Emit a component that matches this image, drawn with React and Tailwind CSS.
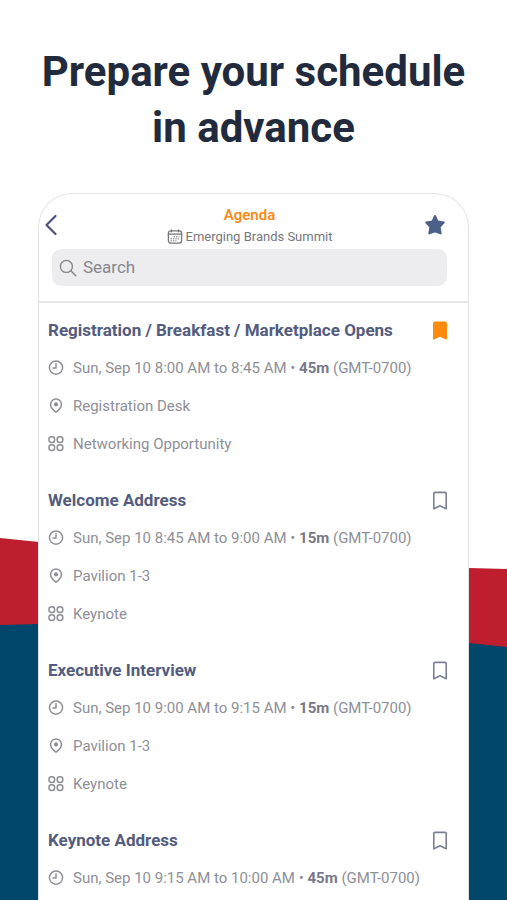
import React, { useState } from "react";

const initialSessions = [
  {
    id: 1,
    title: "Registration / Breakfast / Marketplace Opens",
    time: "Sun, Sep 10 8:00 AM to 8:45 AM",
    duration: "45m",
    location: "Registration Desk",
    category: "Networking Opportunity",
    saved: true,
  },
  {
    id: 2,
    title: "Welcome Address",
    time: "Sun, Sep 10 8:45 AM to 9:00 AM",
    duration: "15m",
    location: "Pavilion 1-3",
    category: "Keynote",
    saved: false,
  },
  {
    id: 3,
    title: "Executive Interview",
    time: "Sun, Sep 10 9:00 AM to 9:15 AM",
    duration: "15m",
    location: "Pavilion 1-3",
    category: "Keynote",
    saved: false,
  },
  {
    id: 4,
    title: "Keynote Address",
    time: "Sun, Sep 10 9:15 AM to 10:00 AM",
    duration: "45m",
    saved: false,
  },
];

const ClockIcon = () => (
  <svg viewBox="0 0 16 16" className="h-4 w-4 shrink-0" fill="none" stroke="currentColor" strokeWidth="1.5" strokeLinecap="round" strokeLinejoin="round">
    <circle cx="8" cy="7.6" r="6.6" />
    <path d="M8 3.8V8H5" />
  </svg>
);

const PinIcon = () => (
  <svg viewBox="0 0 16 16" className="h-4 w-4 shrink-0" fill="none" stroke="currentColor" strokeWidth="1.5" strokeLinejoin="round">
    <path d="M8 14.2C5.4 12.2 2.6 9.6 2.6 6.4a5.4 5.4 0 0 1 10.8 0C13.4 9.6 10.6 12.2 8 14.2z" />
    <circle cx="8" cy="6.4" r="2.1" fill="currentColor" stroke="none" />
  </svg>
);

const CategoryIcon = () => (
  <svg viewBox="0 0 16 16" className="h-4 w-4 shrink-0" fill="none" stroke="currentColor" strokeWidth="1.5">
    <rect x="1" y="0.8" width="5.6" height="5.6" rx="2.5" />
    <rect x="9.2" y="0.8" width="5.6" height="5.6" rx="2.5" />
    <rect x="1" y="8.8" width="5.6" height="5.6" rx="2.5" />
    <rect x="9.2" y="8.8" width="5.6" height="5.6" rx="2.5" />
  </svg>
);

const CalendarIcon = () => (
  <svg viewBox="0 0 16 16" className="h-4 w-4 shrink-0" fill="none" stroke="currentColor" strokeWidth="1.3" strokeLinecap="round">
    <rect x="1.4" y="1.8" width="13.2" height="12.4" rx="2.6" />
    <path d="M1.4 5.2h13.2M4.5 0.8v2M11.5 0.8v2" />
    <path d="M7 7.8h5M4 9.8h8M4 11.8h5" strokeWidth="1" strokeDasharray="0.6 1.8" />
  </svg>
);

const BookmarkIcon = ({ filled }) => (
  <svg
    viewBox="0 0 16 20"
    className={filled ? "h-5 w-4 text-[#ff8a0c]" : "h-5 w-4 text-[#7c8093]"}
    fill={filled ? "currentColor" : "none"}
    stroke="currentColor"
    strokeWidth="1.6"
    strokeLinejoin="round"
  >
    <path d="M1.8 2.6a1.2 1.2 0 0 1 1.2-1.2h10a1.2 1.2 0 0 1 1.2 1.2v15.2L8 14.8l-6.2 3z" />
  </svg>
);

const Detail = ({ icon, children }) => (
  <li className="flex h-[38px] items-center gap-[9px] text-[15px] whitespace-nowrap text-[#8e8f97]">
    {icon}
    <span>{children}</span>
  </li>
);

const Session = ({ session, onToggle }) => (
  <article>
    <div className="flex h-9 items-center justify-between">
      <h2 className="text-[17px] font-bold whitespace-nowrap text-[#535c7e]">
        {session.title}
      </h2>
      <button
        type="button"
        aria-label={session.saved ? "Remove bookmark" : "Bookmark session"}
        aria-pressed={session.saved}
        onClick={() => onToggle(session.id)}
      >
        <BookmarkIcon filled={session.saved} />
      </button>
    </div>
    <ul>
      <Detail icon={<ClockIcon />}>
        {session.time} • <b className="font-bold text-[#777986]">{session.duration}</b>{" "}
        (GMT-0700)
      </Detail>
      {session.location && <Detail icon={<PinIcon />}>{session.location}</Detail>}
      {session.category && <Detail icon={<CategoryIcon />}>{session.category}</Detail>}
    </ul>
  </article>
);

const Backdrop = () => (
  <svg
    className="absolute inset-0 -z-10 h-full w-full"
    viewBox="0 0 507 900"
    preserveAspectRatio="none"
    aria-hidden="true"
  >
    <path d="M0 538L39 542L469 568L507 569V900H0z" fill="#bf1e2e" />
    <path d="M0 625L39 624L469 643L507 647V900H0z" fill="#00476b" />
  </svg>
);

export default function App() {
  const [sessions, setSessions] = useState(initialSessions);
  const [query, setQuery] = useState("");

  const toggleSaved = (id) => {
    setSessions((list) =>
      list.map((s) => (s.id === id ? { ...s, saved: !s.saved } : s))
    );
  };

  const visible = sessions.filter((s) =>
    s.title.toLowerCase().includes(query.trim().toLowerCase())
  );

  return (
    <div className="relative isolate flex h-screen flex-col overflow-hidden bg-white font-[Roboto,sans-serif]">
      <Backdrop />
      <h1 className="pt-11 text-center text-[42px] leading-[56px] font-bold text-[#222b3d]">
        Prepare your schedule
        <br />
        in advance
      </h1>

      <main className="mx-[38px] mt-[37px] flex-1 rounded-t-[34px] border border-b-0 border-[#e4e4e6] bg-white">
        <header className="border-b-2 border-[#e6e6e8] pt-[10px] pb-[15px]">
          <div className="flex items-start pr-[22px] pl-1">
            <button type="button" aria-label="Back" className="mt-[10px] w-8 text-[#4b5478]">
              <svg viewBox="0 0 16 22" className="h-[22px] w-4" fill="none" stroke="currentColor" strokeWidth="2.2" strokeLinecap="round" strokeLinejoin="round">
                <path d="M12.5 2L3.500 11l9 9" />
              </svg>
            </button>
            <div className="flex-1 text-center">
              <p className="text-[15px] leading-[22px] font-semibold text-[#f98a17]">Agenda</p>
              <p className="flex items-center justify-center gap-[3px] text-[13px] leading-[22px] text-[#77777c]">
                <CalendarIcon />
                Emerging Brands Summit
              </p>
            </div>
            <button type="button" aria-label="Favorites" className="mt-[10px] text-[#4c6088]">
              <svg viewBox="0 0 22 22" className="h-[22px] w-[22px]" fill="currentColor" stroke="currentColor" strokeWidth="2" strokeLinejoin="round">
                <path d="M11 2l2.600 5.600 6.200.8-4.200 4.600 1.100 6.400-5.700-2.200-5.700 2.200 1.100-6.400-4.200-4.600 6.200-.8z" />
              </svg>
            </button>
          </div>
          <label className="mt-px mr-[21px] ml-[13px] flex h-[37px] items-center gap-[6px] rounded-[9px] bg-[#ededef] pl-[7px] text-[#85868c]">
            <svg viewBox="0 0 18 18" className="h-[18px] w-[18px] shrink-0" fill="none" stroke="currentColor" strokeWidth="1.4" strokeLinecap="round">
              <circle cx="7.4" cy="7.4" r="6" />
              <path d="M11.8 11.8l5 5" />
            </svg>
            <input
              type="text"
              aria-label="Search"
              placeholder="Search"
              value={query}
              onChange={(e) => setQuery(e.target.value)}
              className="min-w-0 flex-1 bg-transparent text-[17px] outline-none placeholder:text-[#85868c]"
            />
          </label>
        </header>

        <div className="space-y-5 pt-[10px] pr-5 pl-[9px]">
          {visible.map((session) => (
            <Session key={session.id} session={session} onToggle={toggleSaved} />
          ))}
        </div>
      </main>
    </div>
  );
}
